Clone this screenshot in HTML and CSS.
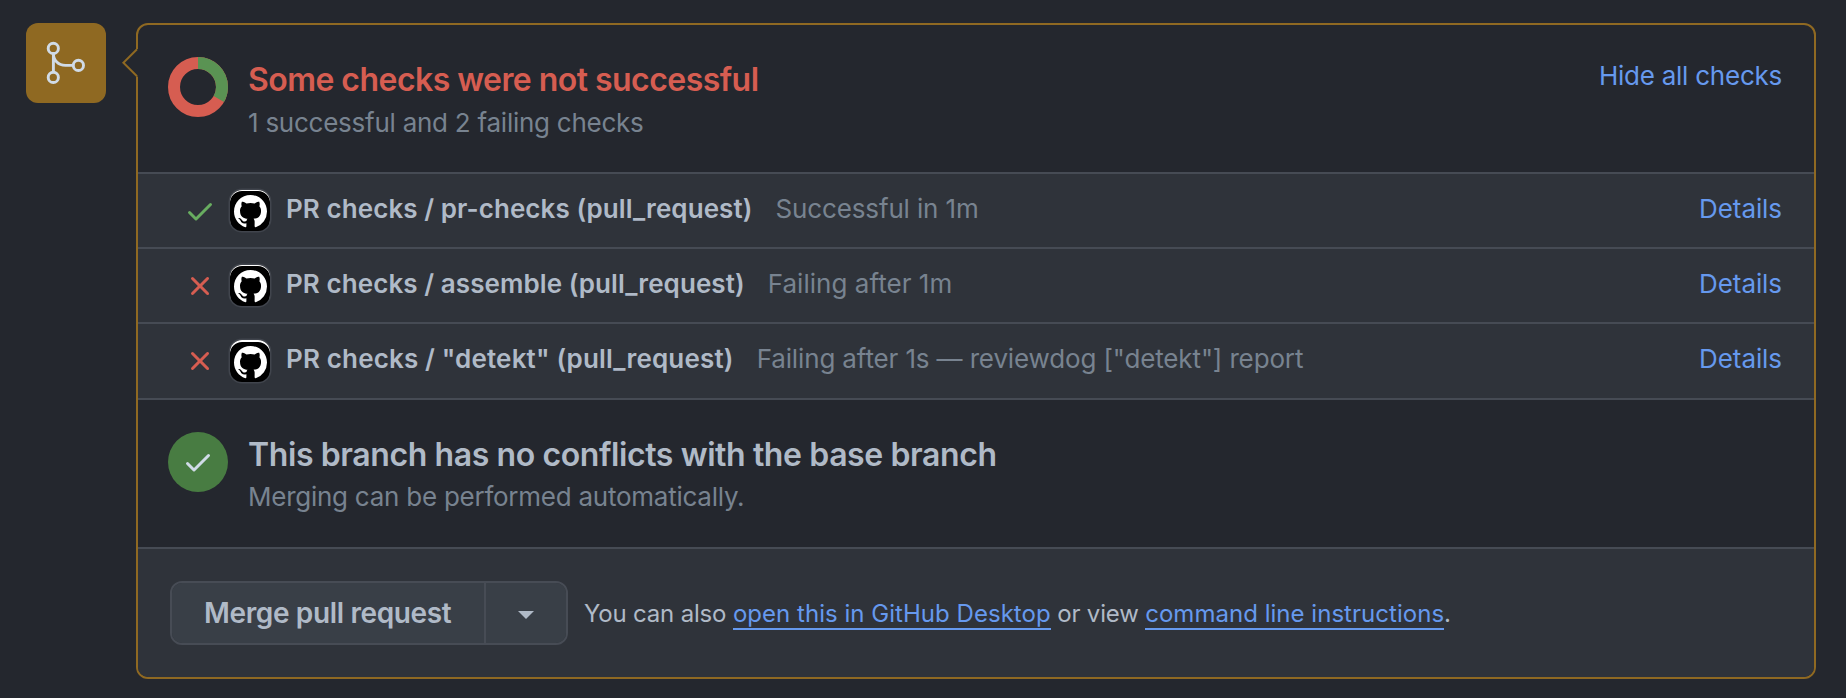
FILE: index.html
```html
<!DOCTYPE html>
<html lang="en">
<head>
<meta charset="utf-8">
<title>Pull request checks</title>
<link rel="stylesheet" href="styles.css">
</head>
<body>
<svg class="defs" width="0" height="0">
  <symbol id="check" viewBox="0 0 16 16"><path d="M13.78 4.22a.75.75 0 0 1 0 1.06l-7.25 7.25a.75.75 0 0 1-1.06 0L2.22 9.28a.751.751 0 0 1 .018-1.042.751.751 0 0 1 1.042-.018L6 10.94l6.72-6.72a.75.75 0 0 1 1.06 0Z"/></symbol>
  <symbol id="cross" viewBox="0 0 16 16"><path d="M3.72 3.72a.75.75 0 0 1 1.06 0L8 6.94l3.22-3.22a.749.749 0 0 1 1.275.326.749.749 0 0 1-.215.734L9.06 8l3.22 3.22a.749.749 0 0 1-.326 1.275.749.749 0 0 1-.734-.215L8 9.06l-3.22 3.22a.751.751 0 0 1-1.042-.018.751.751 0 0 1-.018-1.042L6.94 8 3.72 4.78a.75.75 0 0 1 0-1.06Z"/></symbol>
  <symbol id="mark" viewBox="0 0 16 16"><path d="M8 0C3.58 0 0 3.58 0 8c0 3.54 2.29 6.53 5.47 7.59.4.07.55-.17.55-.38 0-.19-.01-.82-.01-1.49-2.01.37-2.53-.49-2.69-.94-.09-.23-.48-.94-.82-1.13-.28-.15-.68-.52-.01-.53.63-.01 1.08.58 1.23.82.72 1.21 1.87.87 2.33.66.07-.52.28-.87.51-1.07-1.78-.2-3.64-.89-3.64-3.95 0-.87.31-1.59.82-2.15-.08-.2-.36-1.02.08-2.12 0 0 .67-.21 2.2.82.64-.18 1.32-.27 2-.27s1.36.09 2 .27c1.53-1.04 2.2-.82 2.2-.82.44 1.1.16 1.92.08 2.12.51.56.82 1.27.82 2.15 0 3.07-1.87 3.75-3.65 3.95.29.25.54.73.54 1.48 0 1.07-.01 1.93-.01 2.2 0 .21.15.46.55.38A8.01 8.01 0 0 0 16 8c0-4.42-3.58-8-8-8Z"/></symbol>
</svg>
<main class="timeline">
  <div class="badge">
    <svg width="80" height="80" viewBox="0 0 80 80" fill="none" stroke="currentColor" stroke-width="2.9">
      <circle cx="27.3" cy="25.4" r="5.1"/><circle cx="27.3" cy="54.4" r="5.1"/><circle cx="52.4" cy="42.4" r="5.1"/>
      <path d="M27.4 30.5v18.8M27.4 30.5c0 7 5 11.9 12 11.9h7.8"/>
    </svg>
  </div>
  <section class="box">
    <svg class="pointer" width="18" height="30" viewBox="0 0 18 30"><path d="M18 1H16L3 14.8 16 28.6H18Z" class="pointer-fill"/><path d="M17 1.2 3.4 14.7 17 28.2" class="pointer-line"/></svg>
    <header class="status">
      <svg class="status-icon" width="60" height="60" viewBox="0 0 60 60" fill="none" stroke-width="12">
        <circle class="ring-fail" cx="30" cy="30" r="24"/>
        <circle class="ring-pass" cx="30" cy="30" r="24" pathLength="3" stroke-dasharray="1 2" transform="rotate(-90 30 30)"/>
      </svg>
      <div class="status-text">
        <h2 class="title title-fail">Some checks were not successful</h2>
        <p class="subtitle">1 successful and 2 failing checks</p>
      </div>
      <a class="link toggle">Hide all checks</a>
    </header>
    <ul class="checks">
      <li class="check">
        <svg class="state pass"><use href="#check"/></svg>
        <span class="app"><svg class="app-mark"><use href="#mark"/></svg></span>
        <strong class="name">PR checks / pr-checks (pull_request)</strong>
        <span class="result">Successful in 1m</span>
        <a class="link details">Details</a>
      </li>
      <li class="check">
        <svg class="state fail"><use href="#cross"/></svg>
        <span class="app"><svg class="app-mark"><use href="#mark"/></svg></span>
        <strong class="name">PR checks / assemble (pull_request)</strong>
        <span class="result result-short">Failing after 1m</span>
        <a class="link details">Details</a>
      </li>
      <li class="check check-last">
        <svg class="state fail"><use href="#cross"/></svg>
        <span class="app"><svg class="app-mark"><use href="#mark"/></svg></span>
        <strong class="name">PR checks / "detekt" (pull_request)</strong>
        <span class="result">Failing after 1s — reviewdog ["detekt"] report</span>
        <a class="link details">Details</a>
      </li>
    </ul>
    <div class="status">
      <span class="status-icon circle"><svg class="circle-check"><use href="#check"/></svg></span>
      <div class="status-text">
        <h2 class="title title-branch">This branch has no conflicts with the base branch</h2>
        <p class="subtitle subtitle-branch">Merging can be performed automatically.</p>
      </div>
    </div>
    <footer class="actions">
      <div class="button-group">
        <button class="merge">Merge pull request</button>
        <button class="more" aria-label="Select merge method"><svg width="16" height="8" viewBox="0 0 16 8"><path d="M0 0H16L8 8Z" fill="currentColor"/></svg></button>
      </div>
      <p class="hint">You can also <a class="hint-link">open this in GitHub Desktop</a> or view <a class="hint-link">command line instructions</a>.</p>
    </footer>
  </section>
</main>
</body>
</html>
```

FILE: styles.css
```css
* { box-sizing: border-box; }
body {
  margin: 0;
  background: #24272e;
  color: #b0bac7;
  font: 26px/39px Inter, "Liberation Sans", sans-serif;
}
h2, p, ul { margin: 0; padding: 0; }
.defs { position: absolute; }

.timeline {
  display: flex;
  align-items: flex-start;
  gap: 30px;
  padding: 23px 30px 19px 26px;
}
.badge {
  flex: none;
  width: 80px;
  height: 80px;
  border-radius: 12px;
  background: #8f6922;
  color: #d0dbe7;
}
.badge svg { display: block; }

.box {
  position: relative;
  flex: 1;
  border: 2px solid #8f6922;
  border-radius: 12px;
}
.pointer { position: absolute; left: -18px; top: 23px; }
.pointer-fill { fill: #24272e; }
.pointer-line { fill: none; stroke: #8f6922; stroke-width: 2; }

.status { display: flex; height: 147px; padding: 30px 32px 0 30px; }
.status-icon { flex: none; width: 60px; height: 60px; margin: 2px 20px 0 0; }
.status-text { flex: 1; }
.ring-fail { stroke: #d65d51; }
.ring-pass { stroke: #5a9353; }
.title { padding-top: 1px; font-size: 32px; line-height: 48px; height: 48px; font-weight: 600; }
.title-fail { color: #d65d51; letter-spacing: -0.545px; }
.title-branch { letter-spacing: -0.401px; }
.subtitle { color: #788390; letter-spacing: -0.25px; }
.subtitle-branch { margin-top: -1px; letter-spacing: -0.25px; }
.link { color: #6699ee; }
.toggle { margin-top: 1px; letter-spacing: -0.245px; }

.circle {
  display: flex;
  align-items: center;
  justify-content: center;
  border-radius: 50%;
  background: #487c42;
}
.circle-check { width: 32px; height: 32px; fill: #d0dbe7; }

.checks { list-style: none; border-top: 2px solid #464b54; }
.check {
  display: flex;
  align-items: flex-start;
  height: 75px;
  padding: 15px 32px 0 46px;
  border-bottom: 2px solid #464b54;
  background: #2f333a;
}
.check-last { height: 76px; }
.state { flex: none; width: 32px; height: 32px; margin-top: 6px; }
.pass { fill: #68ad60; }
.fail { fill: #d65d51; }
.app {
  flex: none;
  width: 40px;
  height: 41px;
  margin: 1px 16px 0 14px;
  padding: 5px 0 0 3.5px;
  border-radius: 12px;
  background: #000;
  box-shadow: inset 0 1px #fff, 0 0 0 1.5px #41454d;
}
.check-last .app { height: 42px; padding-top: 6px; box-shadow: inset 0 2px #fff, 0 0 0 1.5px #41454d; }
.app-mark { display: block; width: 33px; height: 33px; fill: #fff; }
.name { font-weight: 600; letter-spacing: 0.075px; }
.check-last .name { letter-spacing: 0.16px; }
.result { margin-left: 23px; color: #788390; letter-spacing: -0.135px; }
.result-short { letter-spacing: 0.03px; }
.details { margin-left: auto; letter-spacing: -0.075px; }

.actions {
  display: flex;
  align-items: center;
  gap: 16px;
  height: 130px;
  padding-left: 32px;
  border-top: 2px solid #464b54;
  border-radius: 0 0 10px 10px;
  background: #2f333a;
}
.button-group {
  display: flex;
  width: 398px;
  height: 64px;
  border: 2px solid #474c55;
  border-radius: 12px;
  overflow: hidden;
}
.merge, .more {
  border: 0;
  padding: 0;
  background: #393f47;
  color: #b0bac7;
  font: 600 28px/60px Inter, "Liberation Sans", sans-serif;
}
.merge { width: 314px; padding-left: 32px; border-right: 2px solid #474c55; text-align: left; letter-spacing: -0.36px; white-space: nowrap; }
.more { display: flex; flex: 1; align-items: center; justify-content: center; padding-top: 3px; }
.hint { padding-top: 2px; font-size: 24px; line-height: 36px; letter-spacing: -0.18px; }
.hint-link { color: #6699ee; border-bottom: 2px solid #6699ee; letter-spacing: 0.03px; }
```
